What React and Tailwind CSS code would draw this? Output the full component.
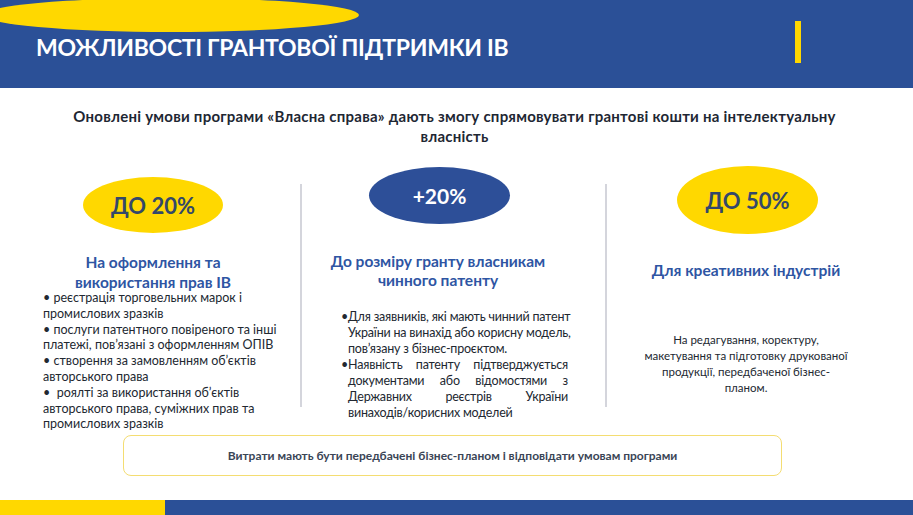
const font = { fontFamily: '"Lato", "Open Sans", "Noto Sans", sans-serif' }

function Ellipse({ className = "", children }) {
  return (
    <div className={`flex items-center justify-center rounded-[50%] font-bold ${className}`}>
      {children}
    </div>
  )
}

function Separator() {
  return <div className="mt-[17px] h-[223px] w-[2px] shrink-0 bg-[#d4d5dc]" />
}

function JustLine({ children }) {
  return <span className="block text-justify [text-align-last:justify]">{children}</span>
}

export default function App() {
  return (
    <div className="relative flex h-[515px] w-[913px] flex-col overflow-hidden bg-white" style={font}>
      <header className="relative flex h-[88px] shrink-0 items-start bg-[#2b5097]">
        <div className="absolute left-[-17px] top-[-2px] h-[34px] w-[376px] rounded-[50%] bg-[#ffd800]" />
        <h1 className="relative pl-[36px] pt-[30px] text-[23px] font-bold tracking-[-0.3px] text-white">
          МОЖЛИВОСТІ ГРАНТОВОЇ ПІДТРИМКИ ІВ
        </h1>
        <div className="ml-auto mr-[112px] mt-[21px] h-[42px] w-[6px] bg-[#ffd800]" />
      </header>

      <p className="mt-[18px] pr-[4px] text-center text-[15px] font-bold leading-[20px] tracking-[0.25px] text-[#1e2733]">
        Оновлені умови програми «Власна справа» дають змогу спрямовувати грантові кошти на інтелектуальну
        <br />
        власність
      </p>

      <div className="mt-[21px] flex h-[265px]">
        <div className="w-[300px] shrink-0 pl-[43px]">
          <Ellipse className="ml-[40px] mt-[10px] h-[56px] w-[140px] bg-[#ffd800] text-[22px] text-[#34486a]">
            ДО 20%
          </Ellipse>
          <h2 className="ml-[-4px] mt-[19px] w-[228px] text-center text-[15.5px] font-bold leading-[20px] text-[#2e55a3]">
            На оформлення та
            <br />
            використання прав ІВ
          </h2>
          <ul className="mt-[-2px] w-[250px] text-[12.5px] leading-[15.8px] text-[#222831]">
            <li>
              • реєстрація торговельних марок і<br />
              промислових зразків
            </li>
            <li>
              • послуги патентного повіреного та інші
              <br />
              платежі, пов’язані з оформленням ОПІВ
            </li>
            <li>
              • створення за замовленням об’єктів
              <br />
              авторського права
            </li>
            <li>
              •&nbsp; роялті за використання об’єктів
              <br />
              авторського права, суміжних прав та
              <br />
              промислових зразків
            </li>
          </ul>
        </div>

        <Separator />

        <div className="w-[303px] shrink-0">
          <Ellipse className="ml-[67px] h-[57px] w-[141px] bg-[#2d4f98] text-[21px] text-white">
            +20%
          </Ellipse>
          <h2 className="ml-[22px] mt-[28px] w-[228px] text-center text-[15.5px] font-bold leading-[19px] text-[#2e55a3]">
            До розміру гранту власникам
            <br />
            чинного патенту
          </h2>
          <ul className="ml-[46px] mt-[19px] w-[220px] text-[12.5px] leading-[16px] tracking-[-0.2px] text-[#222831]">
            <li className="relative whitespace-nowrap">
              <span className="absolute left-[-7px]">•</span>
              Для заявників, які мають чинний патент
              <br />
              України на винахід або корисну модель,
              <br />
              пов’язану з бізнес-проєктом.
            </li>
            <li className="relative">
              <span className="absolute left-[-7px]">•</span>
              <JustLine>Наявність патенту підтверджується</JustLine>
              <JustLine>документами або відомостями з</JustLine>
              <JustLine>Державних реєстрів України</JustLine>
              <span className="block">винаходів/корисних моделей</span>
            </li>
          </ul>
        </div>

        <Separator />

        <div className="flex-1">
          <Ellipse className="ml-[70px] mt-[-1px] h-[68px] w-[141px] bg-[#ffd800] text-[22px] text-[#34486a]">
            ДО 50%
          </Ellipse>
          <h2 className="ml-[32px] mt-[26px] w-[214px] text-center text-[15.5px] font-bold leading-[20px] text-[#2e55a3]">
            Для креативних індустрій
          </h2>
          <p className="ml-[22px] mt-[52px] w-[234px] text-center text-[11.5px] leading-[16px] text-[#222831]">
            На редагування, коректуру,
            <br />
            макетування та підготовку друкованої
            <br />
            продукції, передбаченої бізнес-
            <br />
            планом.
          </p>
        </div>
      </div>

      <div className="mx-[123px] mt-[3px] flex h-[41px] w-[659px] items-center justify-center rounded-[8px] border border-[#f4dd72] text-[12px] font-bold text-[#3a4556]">
        Витрати мають бути передбачені бізнес-планом і відповідати умовам програми
      </div>

      <div className="mt-auto flex h-[15px]">
        <div className="w-[165px] bg-[#ffd800]" />
        <div className="flex-1 bg-[#2b5097]" />
      </div>
    </div>
  )
}
